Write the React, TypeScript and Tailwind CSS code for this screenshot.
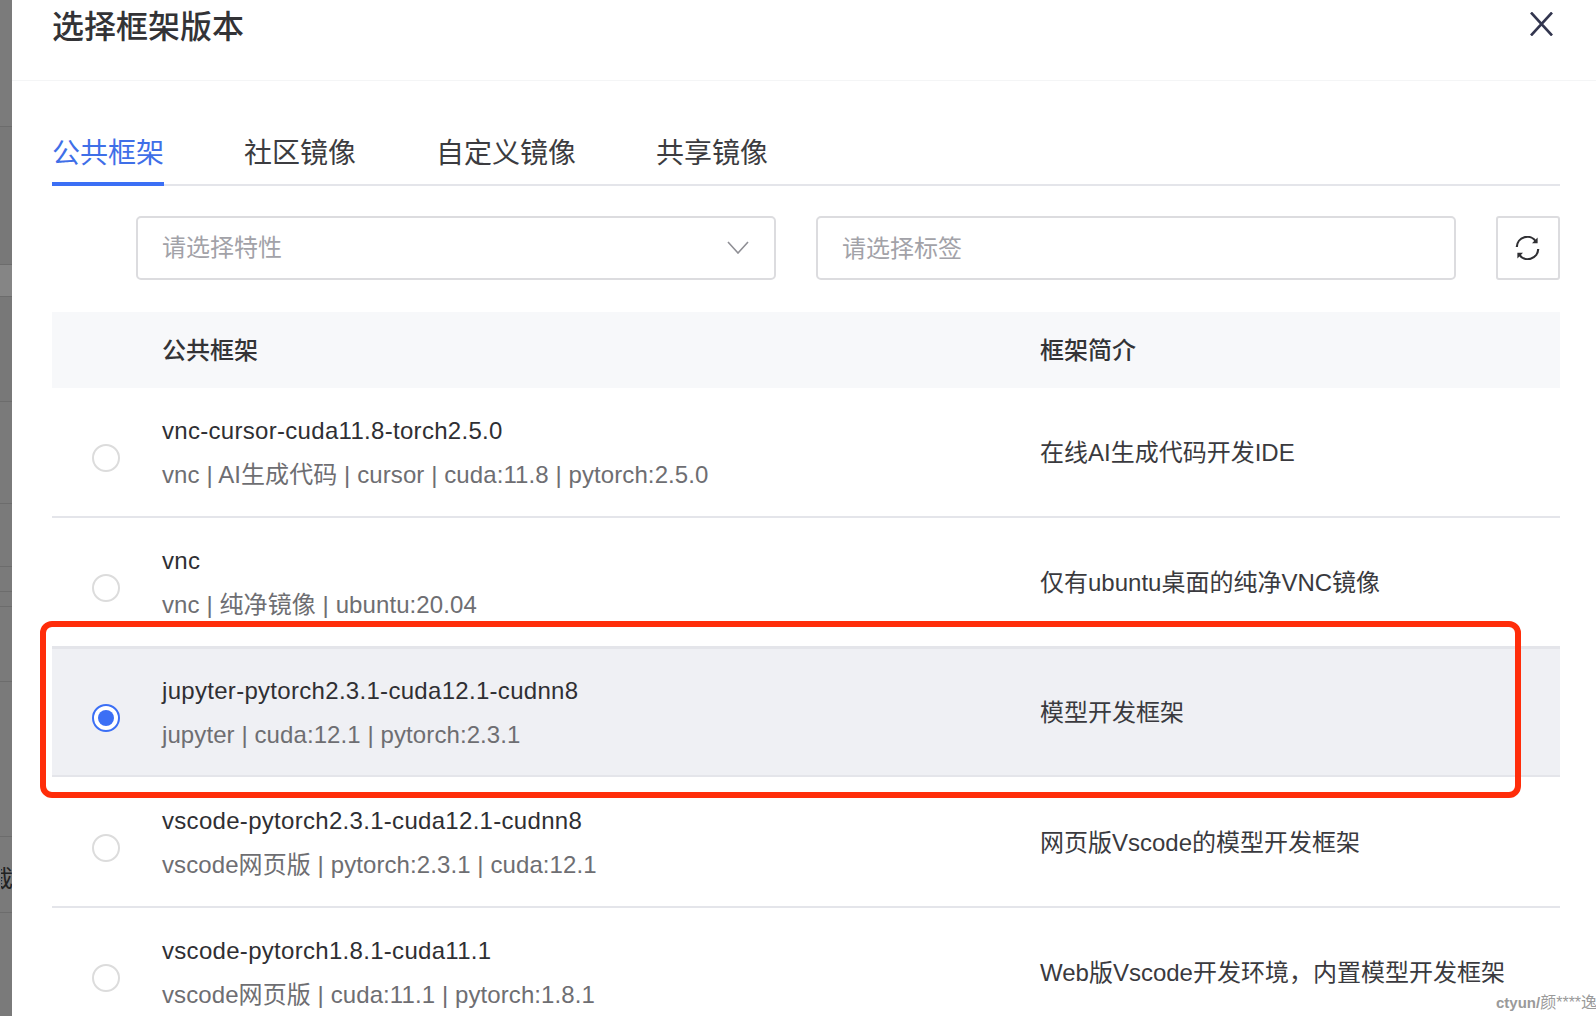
const CJK = "font-['Liberation_Sans','Noto_Sans_CJK_SC',sans-serif]";

const rows = [
  { name: "vnc-cursor-cuda11.8-torch2.5.0", sub: "vnc | AI生成代码 | cursor | cuda:11.8 | pytorch:2.5.0", intro: "在线AI生成代码开发IDE" },
  { name: "vnc", sub: "vnc | 纯净镜像 | ubuntu:20.04", intro: "仅有ubuntu桌面的纯净VNC镜像" },
  { name: "jupyter-pytorch2.3.1-cuda12.1-cudnn8", sub: "jupyter | cuda:12.1 | pytorch:2.3.1", intro: "模型开发框架", selected: true },
  { name: "vscode-pytorch2.3.1-cuda12.1-cudnn8", sub: "vscode网页版 | pytorch:2.3.1 | cuda:12.1", intro: "网页版Vscode的模型开发框架" },
  { name: "vscode-pytorch1.8.1-cuda11.1", sub: "vscode网页版 | cuda:11.1 | pytorch:1.8.1", intro: "Web版Vscode开发环境，内置模型开发框架" },
];

function Gutter() {
  const segs = [
    ["h-[127px]", "bg-[#7b7b7b]"],
    ["h-[138px]", "bg-[#787878]"],
    ["h-[32px]", "bg-[#858585]"],
    ["h-[105px]", "bg-[#787878]"],
    ["h-[102px]", "bg-[#7a7a7a]"],
    ["h-[63px]", "bg-[#7a7a7a]"],
    ["h-[25px]", "bg-[#7a7a7a]"],
    ["h-[15px]", "bg-[#7a7a7a]"],
    ["h-[75px]", "bg-[#7a7a7a]"],
    ["h-[155px]", "bg-[#7a7a7a]"],
  ];
  return (
    <div className="w-[12px] shrink-0 flex flex-col overflow-hidden bg-[#7a7a7a]">
      {segs.map(([h, bg], i) => (
        <div key={i} className={`${h} ${bg} border-b border-[#6c6c6c]`} />
      ))}
      <div className="h-[76px] pt-[8px] flex items-center justify-end border-b border-[#6c6c6c] overflow-hidden">
        <span className="shrink-0 text-[24px] leading-none text-[#222] -mr-[1px] w-[12px] overflow-hidden flex justify-end">
          <span className="shrink-0">截</span>
        </span>
      </div>
    </div>
  );
}

function Radio({ on }: { on?: boolean }) {
  return (
    <div className={`w-[28px] h-[28px] rounded-full border-2 flex items-center justify-center ${on ? "border-[#3b6ff5] bg-white" : "border-[#dcdcdc] bg-white"}`}>
      {on && <div className="w-[16px] h-[16px] rounded-full bg-[#3b6ff5]" />}
    </div>
  );
}

function Row({ r, last }: { r: (typeof rows)[number]; last: boolean }) {
  return (
    <div className={`relative h-[130px] shrink-0 flex ${r.selected ? "bg-[#eff0f4] shadow-[inset_0_2px_0_#e4e5ea,inset_0_-2px_0_#e4e5ea]" : ""}`}>
      <div className="w-[110px] shrink-0 pl-[40px] pt-[57px]">
        <Radio on={r.selected} />
      </div>
      <div className="w-[878px] shrink-0 pt-[28px]">
        <div className="text-[24px] leading-[32px] tracking-[0.3px] text-[#2f2f33] whitespace-nowrap">{r.name}</div>
        <div className="mt-[12px] text-[24px] leading-[32px] tracking-[0.09px] text-[#6e6e72] whitespace-nowrap">{r.sub}</div>
      </div>
      <div className="flex-1 pt-[50px] text-[24px] leading-[32px] text-[#3a3a3e] whitespace-nowrap">{r.intro}</div>
      {!r.selected && !last && <div className="absolute left-0 right-0 -bottom-[1px] h-[2px] bg-[#e4e5ea]" />}
    </div>
  );
}

export default function App() {
  return (
    <div className={`w-[1596px] h-[1016px] overflow-hidden relative flex bg-white ${CJK}`}>
      <Gutter />
      <div className="flex-1 min-w-0 flex flex-col">
        <div className="h-[81px] shrink-0 border-b border-[#f4f5f6] pl-[40px] pr-[43px] flex justify-between items-start">
          <h1 className="text-[32px] leading-[54px] font-medium text-[#333336]">选择框架版本</h1>
          <svg width="23" height="24" viewBox="0 0 23 24" className="mt-[12px] text-[#33364f]" fill="none" stroke="currentColor" strokeWidth="2.6">
            <path d="M1 0.5 L22 23.5 M22 0.5 L1 23.5" />
          </svg>
        </div>
        <div className="pl-[40px] pr-[36px] flex flex-col">
          <div className="mt-[49px] h-[56px] flex gap-[80px] border-b-2 border-[#e4e5ea] text-[28px] leading-[48px] text-[#3c3c40]">
            <div className="relative h-[56px] text-[#3f6fe8]">
              公共框架
              <div className="absolute left-0 right-0 bottom-0 h-[4px] bg-[#3b6ff5]" />
            </div>
            <div>社区镜像</div>
            <div>自定义镜像</div>
            <div>共享镜像</div>
          </div>
          <div className="mt-[30px] h-[64px] flex text-[24px] text-[#a2a2a8]">
            <div className="ml-[84px] w-[640px] border-2 border-[#dcdcdf] rounded-[5px] flex items-center justify-between pl-[24px] pr-[25px]">
              <span>请选择特性</span>
              <svg width="22" height="13" viewBox="0 0 22 13" fill="none" stroke="#8f8f95" strokeWidth="1.6" className="mb-[2px]">
                <path d="M1 1 L11 12 L21 1" />
              </svg>
            </div>
            <div className="ml-[40px] w-[640px] border-2 border-[#dcdcdf] rounded-[5px] flex items-center pl-[24px] pt-[2px]">
              请选择标签
            </div>
            <div className="ml-[40px] w-[64px] border-2 border-[#dcdcdf] rounded-[3px] flex items-center justify-center">
              <svg width="25" height="24" viewBox="0 0 25 24" fill="none" stroke="#2f2f33" strokeWidth="2.2" className="mr-[1px]">
                <path d="M1.8 11 A10.5 10.5 0 0 1 21 5.5" />
                <path d="M23.2 13 A10.5 10.5 0 0 1 4 18.5" />
                <path d="M22.6 1.5 V7.2 H17 Z" fill="#2f2f33" stroke="none" />
                <path d="M2.4 22.5 V16.8 H8 Z" fill="#2f2f33" stroke="none" />
              </svg>
            </div>
          </div>
          <div className="mt-[32px] h-[76px] -mb-[1px] shrink-0 pt-[1px] flex items-center bg-[#f7f8fa] text-[24px] font-medium text-[#333336]">
            <div className="w-[110px]" />
            <div className="w-[878px]">公共框架</div>
            <div>框架简介</div>
          </div>
          {rows.map((r, i) => (
            <Row key={r.name} r={r} last={i === rows.length - 1} />
          ))}
        </div>
      </div>
      <div className="absolute left-[40px] top-[621px] w-[1481px] h-[177px] border-[6px] border-[#ff2d0a] rounded-[12px] pointer-events-none" />
      <div className="absolute right-0 bottom-[4px] w-[100px] overflow-hidden whitespace-nowrap text-[15px] leading-[18px] font-bold text-[#9a9a9a]">
        ctyun/<span className="font-normal text-[16px]">颜****逸</span>
      </div>
    </div>
  );
}
